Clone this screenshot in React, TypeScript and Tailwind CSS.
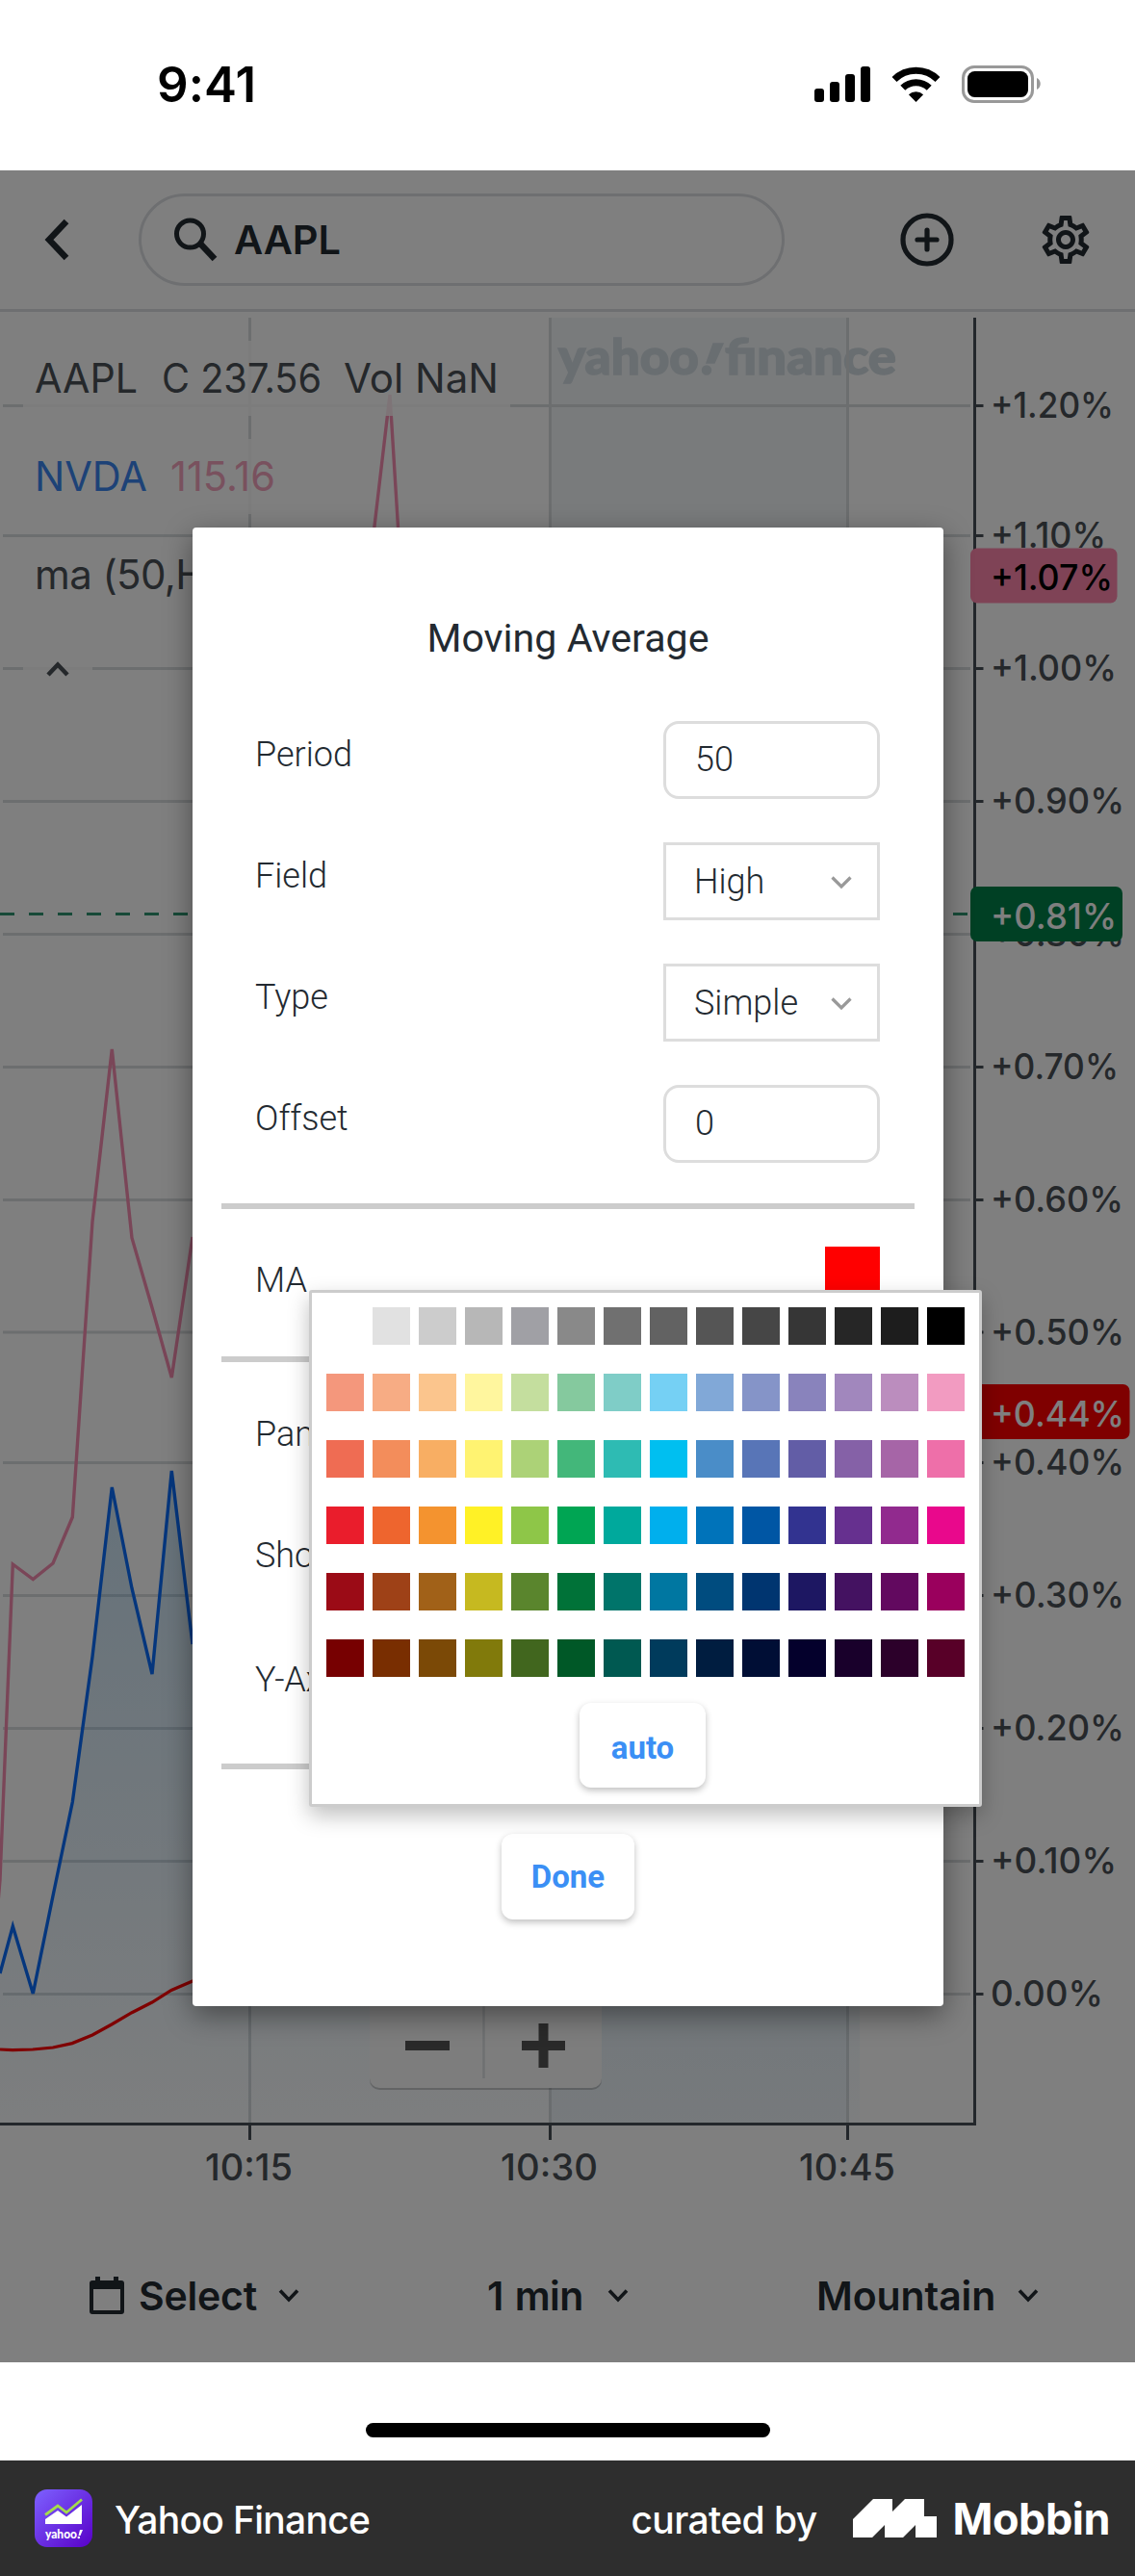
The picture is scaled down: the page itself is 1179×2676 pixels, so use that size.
import type { ReactNode } from 'react';
import { MdOutlineSettings } from 'react-icons/md';

const PALETTE = [
  ['#ffffff', '#e1e1e1', '#cccccc', '#b7b7b7', '#a0a0a5', '#898989', '#707070', '#626262', '#555555', '#464646', '#363636', '#262626', '#1d1d1d', '#000000'],
  ['#f4977c', '#f7ac84', '#fbc58d', '#fff69e', '#c4de9e', '#85c99e', '#7fcdc7', '#75d0f4', '#81a8d7', '#8594c8', '#8983bc', '#a187bd', '#bb8dbe', '#f29bc1'],
  ['#ef6c53', '#f38d5b', '#f8ae63', '#fff371', '#acd277', '#43b77a', '#2ebbb3', '#00bff0', '#4a8dc8', '#5875b7', '#625da6', '#8561a7', '#a665a7', '#ee6fa9'],
  ['#ea1d2c', '#ee652e', '#f4932f', '#fff126', '#8ec648', '#00a553', '#00a99c', '#00afed', '#0073ba', '#0056a4', '#323390', '#66308f', '#912a8e', '#e9088c'],
  ['#9b0b16', '#9e4117', '#a16118', '#c6b920', '#5a852d', '#007238', '#00746a', '#0077a1', '#004c7f', '#003570', '#1d1762', '#441261', '#62095f', '#9a005d'],
  ['#770001', '#792e01', '#7b4906', '#817a0b', '#41661e', '#005827', '#005951', '#003b5c', '#001d40', '#000e35', '#04002c', '#19002b', '#2c002a', '#580028'],
];

const Y_TICKS = [
  { y: 421.5, label: '+1.20%', w: 128 },
  { y: 556.5, label: '+1.10%', w: 120 },
  { y: 694.5, label: '+1.00%', w: 131 },
  { y: 832.5, label: '+0.90%', w: 139 },
  { y: 970.5, label: '+0.80%', w: 139 },
  { y: 1108.5, label: '+0.70%', w: 133 },
  { y: 1246.5, label: '+0.60%', w: 138 },
  { y: 1384, label: '+0.50%', w: 139 },
  { y: 1519.5, label: '+0.40%', w: 139 },
  { y: 1657.5, label: '+0.30%', w: 139 },
  { y: 1795.5, label: '+0.20%', w: 139 },
  { y: 1933.5, label: '+0.10%', w: 131 },
  { y: 2071.5, label: '0.00%', w: 117 },
];

const X_TICKS = [
  { x: 259.5, label: '10:15', start: 215, w: 88 },
  { x: 571.5, label: '10:30', start: 522, w: 98 },
  { x: 880.5, label: '10:45', start: 832, w: 97 },
];

const BLUE = '0,2050 13.3,2001 34.3,2071 55,1969.5 75.3,1872 96,1721 116.3,1545 137,1650 158,1739 178.3,1528 200,1708';
const PINK_LEFT = '-4,2000 0,1953 13.3,1625 34.3,1640.5 55,1624 75.3,1576 96,1269 116.3,1090 137,1286 158,1358.5 178.3,1431 200,1285';
const RED = '0,2129 13,2129.7 34,2129 55,2127 75,2122.6 96,2114 116,2103 137,2090.7 158,2080 178,2067.5 200,2058 240,2044';

function StatusBar() {
  return (
    <div className="flex h-[177px] items-center justify-between bg-white pl-[163px] pr-[97px]">
      <span className="-mt-[2px] font-['Inter'] text-[51px] font-[580] leading-[60px] tracking-[0.1px] text-black">9:41</span>
      <svg width="238" height="42" viewBox="844 66 238 42" className="-mt-[3px]">
        <rect x="846" y="92" width="10" height="14" rx="3" />
        <rect x="862" y="85" width="10" height="21" rx="3" />
        <rect x="878" y="77" width="10" height="29" rx="3" />
        <rect x="894" y="69" width="10" height="37" rx="3" />
        <g fill="none" stroke="#000" strokeWidth="7">
          <path d="M929 82.5a32 32 0 0 1 45 0" />
          <path d="M937.8 91.3a19.5 19.5 0 0 1 27.4 0" />
        </g>
        <path d="M951.5 106l-7.6-7.8a11 11 0 0 1 15.2 0z" />
        <rect x="1000.5" y="69.500" width="72" height="36" rx="11.500" fill="none" stroke="#999" strokeWidth="3" />
        <rect x="1005" y="74" width="63" height="27" rx="7.500" />
        <path d="M1077 81c5 2 5 10 0 12z" fill="#999" />
      </svg>
    </div>
  );
}

function AppHeader() {
  return (
    <div className="flex h-[147px] items-center border-b-[3px] border-[#dcdfe3] bg-white font-['Inter'] text-[#232a31]">
      <svg width="30" height="44" viewBox="0 0 30 44" className="ml-[43px]">
        <path d="M26 3 8 22l18 19" fill="none" stroke="currentColor" strokeWidth="6.500" />
      </svg>
      <div className="ml-[71px] flex h-[96px] w-[671px] items-center rounded-full border-[3px] border-[#dcdfe3] pl-[33px]">
        <svg width="48" height="48" viewBox="0 0 48 48">
          <circle cx="17.500" cy="18" r="14" fill="none" stroke="currentColor" strokeWidth="5" />
          <path d="M28 28 43 44" fill="none" stroke="currentColor" strokeWidth="6.500" />
        </svg>
        <span className="ml-[15px] text-[41.500px] font-[560] leading-[50px] tracking-[-0.1px]">AAPL</span>
      </div>
      <svg width="56" height="56" viewBox="0 0 56 56" className="ml-[120px]" fill="none" stroke="currentColor" strokeWidth="5.200">
        <circle cx="28" cy="28" r="25" />
        <path d="M18 28h20M28 18v20" strokeLinecap="round" />
      </svg>
      <MdOutlineSettings className="ml-[86px] h-[60px] w-[60px]" />
    </div>
  );
}

function Badge({ y, w, fill, color, label, tw }: { y: number; w: number; fill: string; color: string; label: string; tw: number }) {
  return (
    <g>
      <rect x="1008" y={y} width={w} height="57" rx="7" fill={fill} />
      <text x="1029" y={y + 43.5} fontSize="37" fontWeight="550" fill={color} textLength={tw} lengthAdjust="spacingAndGlyphs">{label}</text>
    </g>
  );
}

function Chart() {
  return (
    <svg width="1179" height="1966" viewBox="0 324 1179 1966" className="block font-['Inter']">
      <defs>
        <linearGradient id="mountain" x1="0" y1="1500" x2="0" y2="2206" gradientUnits="userSpaceOnUse">
          <stop offset="0" stopColor="#1a85d0" stopOpacity="0.24" />
          <stop offset="1" stopColor="#1a85d0" stopOpacity="0.02" />
        </linearGradient>
      </defs>
      <rect x="573" y="330" width="308" height="1876" fill="#f2f6f9" />
      <g fontFamily="Lato" fontSize="51" fontWeight="900" fill="#d3dce2" stroke="#d3dce2" strokeWidth="1.500">
        <text x="580" y="389" textLength="146" lengthAdjust="spacingAndGlyphs">yahoo</text>
        <path d="M741 357h10l-9 20h-8z" />
        <circle cx="734" cy="384.500" r="4.500" />
        <text x="753" y="389" textLength="178" lengthAdjust="spacingAndGlyphs">finance</text>
      </g>

      <g stroke="#d9dcde" strokeWidth="3">
        {Y_TICKS.map((t) => <path key={t.label} d={`M3 ${t.y}H1008`} />)}
        {X_TICKS.map((t) => <path key={t.label} d={`M${t.x} 330V2206`} />)}
      </g>

      <polygon points={`0,2206 ${BLUE} 300,1660 500,1500 700,1600 893,1560 893,2206`} fill="url(#mountain)" />
      <polyline points={BLUE} fill="none" stroke="#0a6dfa" strokeWidth="3.400" />
      <polyline points={PINK_LEFT} fill="none" stroke="#f58cb0" strokeWidth="3.400" />
      <polyline points="386,572 405,410 415,572" fill="none" stroke="#f58cb0" strokeWidth="3.400" />
      <polyline points={RED} fill="none" stroke="#ff0000" strokeWidth="3.200" />
      <path d="M0 949.500H1006" stroke="#2f9570" strokeWidth="3" strokeDasharray="15 15" />

      <g fill="#fff" fillOpacity="0.8">
        <rect x="24" y="354" width="506" height="78" />
        <rect x="24" y="456" width="284" height="78" />
        <rect x="24" y="558" width="400" height="78" />
        <rect x="24" y="660" width="72" height="78" />
      </g>
      <g fontSize="42" fill="#4a5056">
        <text x="36" y="408" textLength="107" lengthAdjust="spacingAndGlyphs">AAPL</text>
        <text x="168" y="408" textLength="166" lengthAdjust="spacingAndGlyphs">C 237.56</text>
        <text x="357" y="408" textLength="161" lengthAdjust="spacingAndGlyphs">Vol NaN</text>
        <text x="36" y="510" fill="#3b84ee" textLength="117" lengthAdjust="spacingAndGlyphs">NVDA</text>
        <text x="177" y="510" fill="#f2a3bc" textLength="109" lengthAdjust="spacingAndGlyphs">115.16</text>
        <text x="36" y="612" letterSpacing="-0.600">ma (50,High)</text>
      </g>
      <path d="M50 701l10-10.500 10 10.500" fill="none" stroke="#4a5056" strokeWidth="4.500" />

      <path d="M1012.500 330V2208M0 2206.500H1014" fill="none" stroke="#464e56" strokeWidth="3" />
      <g fontSize="37" fontWeight="550" fill="#4a5056">
        {Y_TICKS.map((t) => (
          <g key={t.label}>
            <path d={`M1013 ${t.y}H1021.500`} stroke="#464e56" strokeWidth="3" />
            <text x="1029" y={t.y + 12.5} textLength={t.w} lengthAdjust="spacingAndGlyphs">{t.label}</text>
          </g>
        ))}
        {X_TICKS.map((t) => (
          <g key={t.label}>
            <path d={`M${t.x} 2206V2223`} stroke="#464e56" strokeWidth="3" />
            <text x={t.start - 2} y="2265" fontSize="38" textLength={t.w + 3} lengthAdjust="spacingAndGlyphs">{t.label}</text>
          </g>
        ))}
      </g>
      <Badge y={569.5} w={152.5} fill="#ff87ad" color="#000" label="+1.07%" tw={127} />
      <Badge y={921} w={158} fill="#008048" color="#fff" label="+0.81%" tw={131} />
      <Badge y={1438} w={165.5} fill="#ff0000" color="#fff" label="+0.44%" tw={139} />

      <g>
        <rect x="384" y="2068" width="241" height="103" rx="10" fill="#000" fillOpacity="0.2" />
        <rect x="384" y="2066" width="241" height="103" rx="10" fill="#fbfbfb" />
        <path d="M502.500 2080V2159" stroke="#dde0e2" strokeWidth="2.500" />
        <path d="M421 2125h46M542 2125h45M564.500 2102v46" stroke="#555" strokeWidth="10" />
      </g>
    </svg>
  );
}

function Caret({ className }: { className: string }) {
  return (
    <svg width="24" height="16" viewBox="0 0 24 16" className={className}>
      <path d="M3 2.500 12 12l9-9.500" fill="none" stroke="currentColor" strokeWidth="3.600" />
    </svg>
  );
}

function Toolbar() {
  return (
    <div className="flex h-[164px] items-center bg-white pt-[25px] font-['Inter'] text-[41px] font-[560] leading-[50px] text-[#232a31]">
      <svg width="38" height="40" viewBox="0 0 38 40" className="ml-[92px] shrink-0">
        <path d="M7 0h5v4h14V0h5v4h3q3 0 3 3v29q0 3-3 3H4q-3 0-3-3V7q0-3 3-3h3zM5 13v22h28V13z" fill="currentColor" fillRule="evenodd" />
      </svg>
      <span className="ml-[14px] w-[121px] tracking-[-0.2px]">Select</span>
      <Caret className="ml-[23px] shrink-0" />
      <span className="ml-[194px] w-[102px] whitespace-nowrap tracking-[-0.5px] [word-spacing:2px]">1 min</span>
      <Caret className="ml-[22px] shrink-0" />
      <span className="ml-[194px] w-[186px] tracking-[-0.1px]">Mountain</span>
      <Caret className="ml-[22px] shrink-0" />
    </div>
  );
}

function Row({ label, children, className }: { label: string; children?: ReactNode; className: string }) {
  return (
    <div className={`flex justify-between pl-[65px] pr-[66px] ${className}`}>
      <span>{label}</span>
      {children}
    </div>
  );
}

function NumberField({ value }: { value: string }) {
  return (
    <div className="h-[81px] w-[225px] rounded-[16px] border-[3px] border-[#dddddd] pl-[30px] leading-[74px]">{value}</div>
  );
}

function SelectField({ value }: { value: string }) {
  return (
    <div className="flex h-[81px] w-[225px] items-center justify-between border-[3px] border-[#dddddd] pl-[29px] pr-[25px] leading-[75px]">
      <span className="pt-[2px]">{value}</span>
      <svg width="24" height="16" viewBox="0 0 24 16" className="mt-[3px]">
        <path d="M2.500 2.500 12 12l9.500-9.500" fill="none" stroke="#999" strokeWidth="3.200" />
      </svg>
    </div>
  );
}

function StudyDialog() {
  return (
    <div className="absolute left-[200px] top-[371px] flex h-[1536px] w-[780px] flex-col rounded-[4px] bg-white pt-[90px] font-['Roboto'] text-[36px] font-light text-[#232a31] shadow-[0_9px_30px_rgba(0,0,0,0.42)]">
      <h2 className="text-center text-[41.200px] font-normal leading-[50px]">Moving Average</h2>
      <div className="mt-[61px]">
        <Row label="Period" className="h-[126px] leading-[71px]"><NumberField value="50" /></Row>
        <Row label="Field" className="h-[126px] leading-[71px]"><SelectField value="High" /></Row>
        <Row label="Type" className="h-[126px] leading-[71px]"><SelectField value="Simple" /></Row>
        <Row label="Offset" className="h-[123px] leading-[71px]"><NumberField value="0" /></Row>
      </div>
      <div className="mx-[30px] h-[6px] shrink-0 bg-[#cccccc]" />
      <Row label="MA" className="h-[153px] leading-[149px]">
        <div className="mt-[39px] h-[57px] w-[57px] bg-[#ff0000]" />
      </Row>
      <div className="mx-[30px] h-[6px] shrink-0 bg-[#cccccc]" />
      <Row label="Panel" className="mt-[12px] h-[126px] leading-[126px]" />
      <Row label="Show" className="h-[126px] leading-[126px]" />
      <Row label="Y-Axis" className="h-[132px] tracking-[-0.3px] leading-[132px]" />
      <div className="mx-[30px] mt-[21px] h-[6px] shrink-0 bg-[#cccccc]" />
      <button className="mt-[67px] h-[89px] w-[138px] self-center rounded-[12px] bg-white text-[33px] font-bold text-[#3b8ff5] shadow-[0_3px_7px_rgba(0,0,0,0.25)]">
        Done
      </button>
    </div>
  );
}

function ColorPicker() {
  return (
    <div className="absolute left-[321px] top-[1163px] flex h-[537px] w-[699px] flex-col rounded-[3px] border-[3px] border-[#cccccc] bg-white px-[15px] pt-[15px] font-['Roboto'] shadow-[0_9px_22px_rgba(0,0,0,0.25)]">
      <div className="grid grid-cols-[repeat(14,39px)] gap-x-[9px] gap-y-[30px]">
        {PALETTE.flat().map((c) => (
          <div key={c} className="h-[39px] w-[39px]" style={{ backgroundColor: c }} />
        ))}
      </div>
      <button className="mr-[6px] mt-[27px] h-[88px] w-[131px] self-center rounded-[12px] bg-white pt-[5px] text-[33px] font-bold text-[#3b8ff5] shadow-[0_3px_7px_rgba(0,0,0,0.25)]">
        auto
      </button>
    </div>
  );
}

function Footer() {
  return (
    <div className="flex h-[120px] items-center bg-[#2e2e2e] font-['Inter'] text-white">
      <svg width="60" height="60" viewBox="0 0 60 60" className="ml-[36px]">
        <defs>
          <linearGradient id="tile" x1="0" y1="0" x2="1" y2="1">
            <stop offset="0" stopColor="#7d61ff" />
            <stop offset="1" stopColor="#5800c8" />
          </linearGradient>
        </defs>
        <rect width="60" height="60" rx="13" fill="url(#tile)" />
        <path d="M11 26.500 24 17l9 7L49 10.500" fill="none" stroke="#a4dc4c" strokeWidth="2.800" />
        <path d="M11 36V31L24 22l9 6.500L49 16v20z" fill="#fff" />
        <text x="11" y="51" fontFamily="Lato" fontSize="13" fontWeight="900" fill="#fff" textLength="33" lengthAdjust="spacingAndGlyphs">yahoo</text>
        <path d="M47 42h3l-2.500 6h-2z" fill="#fff" />
        <circle cx="45.800" cy="50" r="1.300" fill="#fff" />
      </svg>
      <span className="ml-[23px] pt-[3px] text-[39px] font-medium leading-[50px] tracking-[-0.7px]">Yahoo Finance</span>
      <span className="ml-auto pt-[3px] text-[39px] font-medium leading-[50px] tracking-[-0.6px]">curated by</span>
      <svg width="88" height="40" viewBox="0 0 88 40" className="ml-[37px]">
        <path d="M0 21 21 0h20v13L54 0h20v18h13v22H65V27L52 40H33V27L20 40H0z" fill="#fff" />
      </svg>
      <span className="ml-[16px] mr-[26px] pt-[1px] text-[45px] font-bold leading-[50px] tracking-[-0.500px]">Mobbin</span>
    </div>
  );
}

export default function App() {
  return (
    <div className="flex h-[2676px] w-[1179px] flex-col overflow-hidden bg-white">
      <StatusBar />
      <div className="relative flex h-[2277px] flex-col">
        <AppHeader />
        <Chart />
        <Toolbar />
        <div className="absolute inset-0 bg-black/50" />
        <StudyDialog />
        <ColorPicker />
      </div>
      <div className="flex h-[102px] justify-center pt-[63px]">
        <div className="h-[15px] w-[420px] rounded-full bg-black" />
      </div>
      <Footer />
    </div>
  );
}
